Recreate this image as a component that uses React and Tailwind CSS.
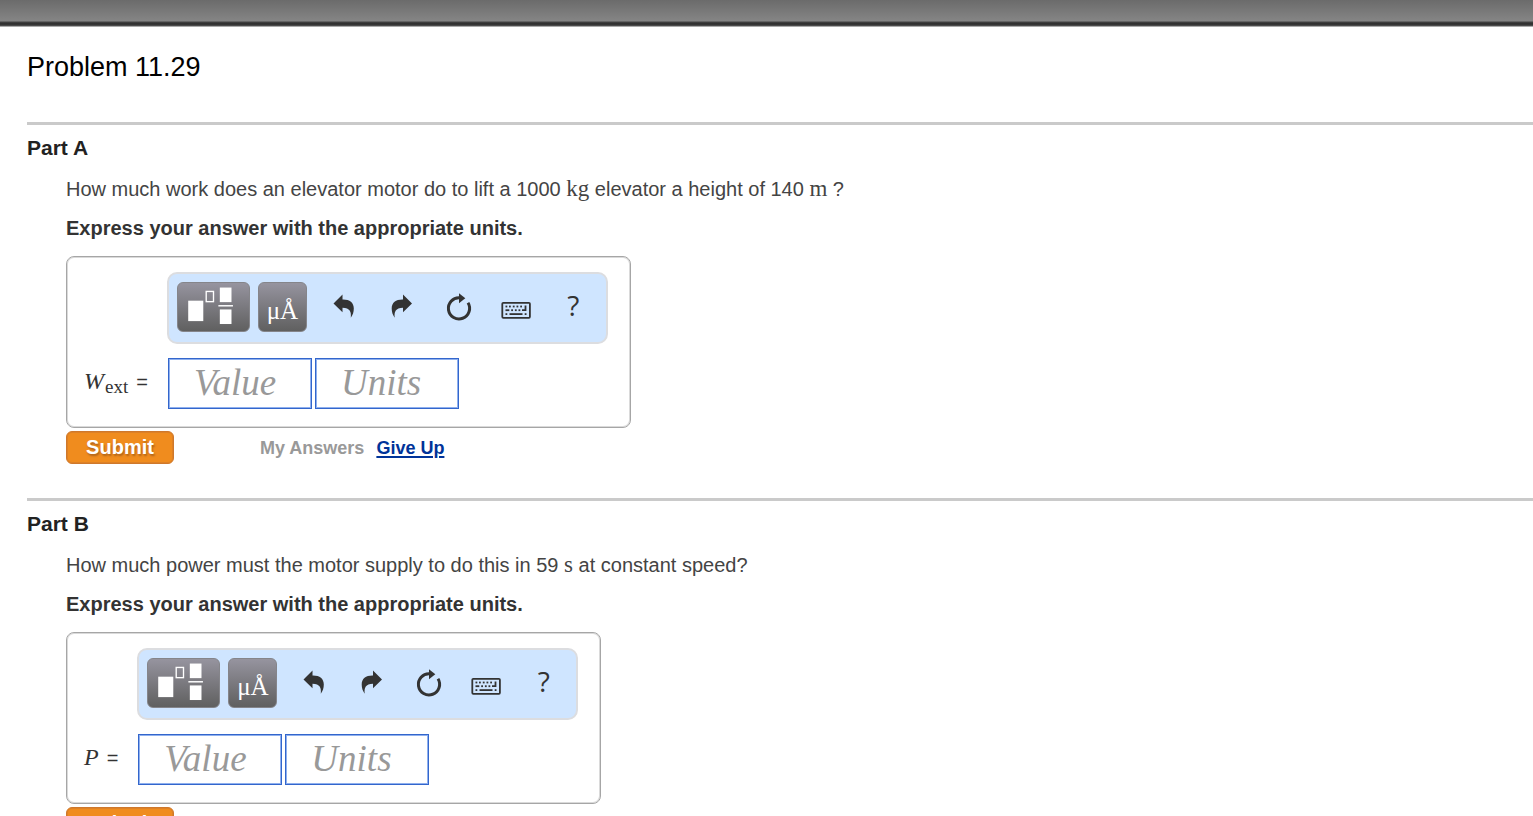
import React from "react";

const SANS = "font-['Liberation_Sans',Arial,sans-serif]";
const SERIF = "font-['Liberation_Serif','Times_New_Roman',serif]";

function TemplateIcon() {
  return (
    <svg width="73" height="50" viewBox="0 0 73 50" fill="white" aria-hidden="true">
      <rect x="10.5" y="18.5" width="15.5" height="21" />
      <rect x="29" y="9" width="7.5" height="10.5" fill="none" stroke="white" strokeWidth="1.4" />
      <rect x="43" y="5" width="12" height="15" />
      <rect x="41.5" y="23" width="15" height="1.5" />
      <rect x="43" y="27.5" width="12" height="15" />
    </svg>
  );
}

const CURVED_ARROW =
  "M18.5 21.5L27.5 12.5V17.5C34.5 17.3 38.8 20.5 38.8 26.5C38.8 30 37.8 33 35.8 35.7C36.4 29.5 35 26 27.5 25.7V30.3Z";

function UndoIcon() {
  return (
    <svg width="57" height="50" viewBox="0 0 57 50" aria-hidden="true">
      <path d={CURVED_ARROW} fill="#333" />
    </svg>
  );
}

function RedoIcon() {
  return (
    <svg width="57" height="50" viewBox="0 0 57 50" aria-hidden="true">
      <path d={CURVED_ARROW} fill="#333" transform="translate(58.5 0) scale(-1 1)" />
    </svg>
  );
}

function ResetIcon() {
  return (
    <svg width="57" height="50" viewBox="0 0 57 50" aria-hidden="true">
      <path d="M30.5 15.7A10.6 10.6 0 1 0 39 20.7" fill="none" stroke="#333" strokeWidth="3" />
      <path d="M30 11.2L36.3 16.2L30 21.2Z" fill="#333" />
    </svg>
  );
}

function KeyboardIcon() {
  return (
    <svg width="57" height="50" viewBox="0 0 57 50" fill="#333" aria-hidden="true">
      <rect x="16.3" y="20.8" width="27.6" height="15" rx="1" fill="none" stroke="#333" strokeWidth="1.8" />
      {[19.5, 23, 26.8, 30.5, 34.2].map((x) => (
        <rect key={x} x={x} y="23.6" width="1.8" height="1.8" />
      ))}
      <rect x="19.5" y="27.3" width="3.8" height="1.8" />
      {[25.2, 28.9, 32.5].map((x) => (
        <rect key={x} x={x} y="27.3" width="1.8" height="1.8" />
      ))}
      <path d="M38.6 23.6h1.8v5.5h-4.4v-1.8h2.6z" />
      <rect x="19.5" y="31.2" width="1.8" height="1.8" />
      <rect x="23.5" y="31.2" width="13" height="1.8" />
      <rect x="38.7" y="31.2" width="1.8" height="1.8" />
    </svg>
  );
}

function ToolButton({ label, children }) {
  return (
    <button type="button" aria-label={label} className="flex h-[50px] w-[57px] items-center justify-center">
      {children}
    </button>
  );
}

function Toolbar() {
  const dark = "h-[50px] rounded-md border border-[#85858a] bg-linear-to-b from-[#96949f] to-[#606060] text-white";
  return (
    <div className="flex h-[72px] items-start rounded-[10px] border-2 border-[#dcdde0] bg-[#cfe5ff] py-2 pr-[6px] pl-2">
      <button type="button" aria-label="Templates" className={`${dark} mr-2 flex w-[73px] items-center justify-center`}>
        <TemplateIcon />
      </button>
      <button type="button" aria-label="Units symbols" className={`${dark} ${SERIF} mr-2 w-[49px] pt-2 text-[25px] leading-10`}>
        μÅ
      </button>
      <ToolButton label="Undo"><UndoIcon /></ToolButton>
      <ToolButton label="Redo"><RedoIcon /></ToolButton>
      <ToolButton label="Reset"><ResetIcon /></ToolButton>
      <ToolButton label="Keyboard shortcuts"><KeyboardIcon /></ToolButton>
      <ToolButton label="Help">
        <span className="pb-1 pl-1 font-['Open_Sans',sans-serif] text-[28px] text-[#333]">?</span>
      </ToolButton>
    </div>
  );
}

function Field({ id, label }) {
  return (
    <input
      id={id}
      aria-label={label}
      placeholder={label}
      className={`${SERIF} h-[51px] w-36 border border-[#3366cc] bg-white pr-2 pb-px pl-[25px] text-[37px] text-[#333] italic inset-ring inset-ring-[#8fb0ee] outline-none placeholder:text-[#999]`}
    />
  );
}

function Part({ name, question, symbol }) {
  return (
    <section className="border-t-3 border-[#cacaca] pb-[34px]">
      <h2 className="pt-[7px] text-[21px] leading-8 font-bold text-[#222]">{name}</h2>
      <div className="pt-[9px] pl-[39px]">
        <p className="text-[20px] leading-[32px] text-[#444]">{question}</p>
        <p className="pt-[7px] text-[20px] leading-[32px] font-bold text-[#333]">Express your answer with the appropriate units.</p>
        <div className="mt-3 grid w-fit grid-cols-[auto_auto] gap-x-[19px] gap-y-[14px] rounded-lg border border-[#a6a6a6] pt-[15px] pr-[22px] pb-[18px] pl-[17px] inset-ring inset-ring-[#dadada]">
          <div className="col-start-2"><Toolbar /></div>
          <label htmlFor={`${name}-value`} className="flex items-center pb-[6px] text-[#333]">{symbol}</label>
          <div className="flex gap-[3px] pl-px">
            <Field id={`${name}-value`} label="Value" />
            <Field id={`${name}-units`} label="Units" />
          </div>
        </div>
        <div className="mt-[3px] flex items-center text-[18px] font-bold">
          <button type="button" className="h-[33px] w-[108px] rounded-md border border-[#cf782b] bg-[#f08c1e] pb-[2px] text-[20px] leading-[28px] text-white inset-ring inset-ring-[#dd8127] text-shadow-[1px_2px_2px_#b0641a]">
            Submit
          </button>
          <span className="ml-[86px] pt-px text-[#999]">My Answers</span>
          <a href="#give-up" className="ml-3 pt-px text-[#003399] underline decoration-2 underline-offset-2">Give Up</a>
        </div>
      </div>
    </section>
  );
}

function Unit({ children }) {
  return <span className={`${SERIF} text-[23px] leading-none`}>{children}</span>;
}

export default function App() {
  return (
    <div className={`${SANS} min-h-screen bg-white`}>
      <header className="h-[27px] border-b border-[#aaa] bg-[linear-gradient(#6b6b6b_0px,#858585_21px,#444_22px,#2b2b2b_24px,#555_26px)]" />
      <main className="pl-[27px]">
        <h1 className="pt-5 pb-[35px] text-[27px] leading-10 text-black">Problem 11.29</h1>
        <Part
          name="Part A"
          question={<>How much work does an elevator motor do to lift a 1000 <Unit>kg</Unit> elevator a height of 140 <Unit>m</Unit> ?</>}
          symbol={
            <span className="flex items-baseline">
              <i className={`${SERIF} text-[24px]`}>W</i>
              <sub className={`${SERIF} top-1 bottom-auto ml-px text-[19px]`}>ext</sub>
              <span className="pl-2 text-[20px]">=</span>
            </span>
          }
        />
        <Part
          name="Part B"
          question={<>How much power must the motor supply to do this in 59 <Unit>s</Unit> at constant speed?</>}
          symbol={
            <span className="flex items-baseline">
              <i className={`${SERIF} text-[24px]`}>P</i>
              <span className="pl-2 text-[20px]">=</span>
            </span>
          }
        />
      </main>
    </div>
  );
}
